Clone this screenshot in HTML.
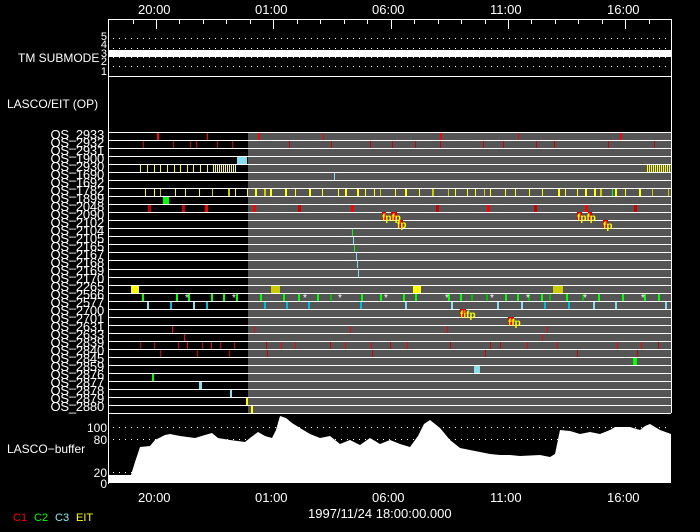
<!DOCTYPE html>
<html><head><meta charset="utf-8"><style>
html,body{margin:0;padding:0;background:#000;width:700px;height:532px;overflow:hidden}
svg{display:block}
text{font-family:"Liberation Sans",sans-serif;fill:#fff}
.os{font-size:13px;text-anchor:end;letter-spacing:-0.2px}
</style></head><body>
<svg id="s" width="700" height="532" viewBox="0 0 700 532">
<rect width="700" height="532" fill="#000"/>
<g font-size="13">
<text x="138" y="14">20:00</text><text x="255" y="14">01:00</text><text x="372" y="14">06:00</text><text x="490" y="14">11:00</text><text x="607" y="14">16:00</text>
<text x="138" y="502">20:00</text><text x="255" y="502">01:00</text><text x="372" y="502">06:00</text><text x="490" y="502">11:00</text><text x="607" y="502">16:00</text>
<text x="308" y="518">1997/11/24 18:00:00.000</text>
</g>
<rect x="248" y="132" width="423" height="281" fill="#555"/>
<g id="marks"></g>
<g id="lines" stroke="#fff" stroke-width="1"></g>
<g stroke="#fff" fill="none">
<line x1="108.5" y1="19" x2="108.5" y2="484"/>
<line x1="671.5" y1="19" x2="671.5" y2="413"/>
<line x1="108" y1="19.5" x2="672" y2="19.5"/>
<line x1="108" y1="76.5" x2="672" y2="76.5"/>
</g>
<g id="ticks" stroke="#fff"></g>
<g stroke="#fff" stroke-dasharray="1,5">
<line x1="113" y1="38.5" x2="671" y2="38.5"/>
<line x1="113" y1="48.5" x2="671" y2="48.5"/>
<line x1="113" y1="57.5" x2="671" y2="57.5"/>
<line x1="113" y1="66.5" x2="671" y2="66.5"/>
<line x1="113" y1="427.5" x2="671" y2="427.5"/>
<line x1="113" y1="439.5" x2="671" y2="439.5"/>
<line x1="113" y1="472.5" x2="135" y2="472.5"/>
</g>
<rect x="109" y="50" width="562" height="7" fill="#fff"/>
<g font-size="11" text-anchor="end">
<text x="107" y="40">5</text><text x="107" y="48">4</text><text x="107" y="57">3</text><text x="107" y="65">2</text><text x="107" y="75">1</text>
</g>
<text x="18" y="62" font-size="12">TM SUBMODE</text>
<text x="7" y="108" font-size="12">LASCO/EIT (OP)</text>
<polygon fill="#fff" points="109,483 109,475 131,475 135,462 140,447 150,446 155,440 165,435 170,434 180,436 195,438 205,435 212,433 218,438 230,440 245,442 250,438 258,432 265,436 272,438 276,430 280,416 286,418 292,423 300,428 310,434 320,438 330,436 340,444 350,440 360,445 370,438 380,444 390,440 400,444 410,447 418,436 424,424 430,420 440,428 450,440 460,448 470,450 480,452 490,454 500,455 510,455 520,456 540,455 550,457 555,454 560,430 570,431 580,434 590,432 600,434 610,430 615,427 630,427 640,430 645,426 650,424 660,430 671,434 671,483"/>
<g font-size="12" text-anchor="end">
<text x="107" y="432">100</text><text x="107" y="444">80</text><text x="107" y="477">20</text><text x="107" y="488">0</text>
</g>
<text x="7" y="453" font-size="12">LASCO−buffer</text>
<g font-size="11">
<text x="13" y="521" style="fill:#f00">C1</text><text x="34" y="521" style="fill:#0f0">C2</text><text x="55" y="521" style="fill:#8ee">C3</text><text x="76" y="521" style="fill:#ff0">EIT</text>
</g>
<g class="os">
<text x="104" y="139">OS_2933</text><text x="104" y="147">OS_2932</text><text x="104" y="155">OS_2931</text><text x="104" y="163">OS_1900</text><text x="104" y="171">OS_2930</text><text x="104" y="179">OS_1690</text><text x="104" y="187">OS_1692</text><text x="104" y="195">OS_1782</text><text x="104" y="203">OS_1899</text><text x="104" y="211">OS_2048</text><text x="104" y="219">OS_2090</text><text x="104" y="227">OS_2102</text><text x="104" y="235">OS_2104</text><text x="104" y="243">OS_2105</text><text x="104" y="251">OS_2165</text><text x="104" y="259">OS_2167</text><text x="104" y="267">OS_2168</text><text x="104" y="275">OS_2169</text><text x="104" y="283">OS_2170</text><text x="104" y="291">OS_2265</text><text x="104" y="299">OS_2566</text><text x="104" y="307">OS_2577</text><text x="104" y="315">OS_2700</text><text x="104" y="323">OS_2701</text><text x="104" y="331">OS_2631</text><text x="104" y="339">OS_2633</text><text x="104" y="347">OS_2839</text><text x="104" y="355">OS_2840</text><text x="104" y="363">OS_2845</text><text x="104" y="371">OS_2859</text><text x="104" y="379">OS_2876</text><text x="104" y="387">OS_2877</text><text x="104" y="395">OS_2878</text><text x="104" y="403">OS_2879</text><text x="104" y="411">OS_2880</text>
</g>
<g fill="#d00">
<rect x="382" y="212" width="4" height="8"/><rect x="391" y="212" width="6" height="8"/><rect x="398" y="220" width="5" height="8"/>
<rect x="577" y="212" width="5" height="8"/><rect x="588" y="212" width="4" height="8"/><rect x="603" y="220" width="5" height="8"/>
<rect x="460" y="309" width="6" height="8"/><rect x="508" y="317" width="6" height="8"/>
</g>
<g font-size="10" style="font-weight:bold">
<text x="382" y="221" style="fill:#ff0">fpfp</text><text x="397" y="228" style="fill:#ff0">fp</text>
<text x="577" y="221" style="fill:#ff0">fpfp</text><text x="603" y="229" style="fill:#ff0">fp</text>
<text x="460" y="318" style="fill:#ff0">fifp</text><text x="508" y="326" style="fill:#ff0">ffp</text>
</g>
</svg>
<script>
var NS="http://www.w3.org/2000/svg";
function el(p,t,a){var e=document.createElementNS(NS,t);for(var k in a)e.setAttribute(k,a[k]);p.appendChild(e);return e;}
var L=document.getElementById('lines'),M=document.getElementById('marks'),T=document.getElementById('ticks');
function ry(i){return Math.round(132+8.03*i);}
for(var i=0;i<=35;i++){var y=ry(i)+0.5;el(L,'line',{x1:109,y1:y,x2:671,y2:y});}
for(var h=0;h<25;h++){var x=Math.round(132.5+23.47*h)+0.5;if(x>671)break;var maj=(h%5==1);el(T,'line',{x1:x,y1:19,x2:x,y2:maj?29:24});}
function m(r,x,w,c,hh){var y=ry(r)+1;el(M,'rect',{x:x,y:y,width:w,height:hh||7,fill:c});}
var R='#f00',D='#c00',Y='#ff0',O='#cc0',G='#0f0',g='#0b0',C='#8de',B='#0bd';
[157,207,258,323,440,518,620].forEach(function(x,i){m(0,x,i%2?1:2,R)});
[143,173,190,196,217,232,289,331,370,392,415,440,483,503,536,554,608,654].forEach(function(x){m(1,x,1,D)});
m(3,237,10,C);
[140,147,154,160,167,174,180,187,193,200,207,213].forEach(function(x){m(4,x,1,Y)});
for(var x=213;x<236;x+=2)m(4,x,1,Y);
for(var x=647;x<671;x+=2)m(4,x,1,Y);
m(5,334,1,C);m(7,612,1,G);
for(var x=145;x<671;x+=6+((x*7)%11)){m(7,x,(x%3==0)?2:1,(x%4==0)?O:Y);}
m(8,163,6,G);
[148,182,205,253,298,351,436,487,534,585,634].forEach(function(x){m(9,x,3,(x%2)?R:D)});
m(12,352,1,G);m(13,353,1,C);m(14,354,1,G);m(15,356,1,C);m(16,357,1,C);m(17,358,1,C);
m(19,131,8,Y);m(19,271,9,O);m(19,413,8,Y);m(19,553,10,O);
[142,176,188,211,223,236,260,283,298,317,330,361,380,403,415,448,460,471,486,505,517,528,541,549,566,582,598,622,644,658].forEach(function(x){m(20,x,2,(x%3)?G:g)});
[147,170,193,206,264,286,308,360,405,451,497,521,544,568,593,615,665].forEach(function(x){m(21,x,2,(x%2)?C:B)});
[172,254,350,447,547].forEach(function(x){m(24,x,1,R)});
[184,542].forEach(function(x){m(25,x,1,R)});
[140,154,178,187,202,211,220,234,266,281,295,330,345,371,390,407,450,490,500,527,557,617,641,658].forEach(function(x){m(26,x,1,(x%2)?R:D)});
[160,197,229,267,372,485,577,637].forEach(function(x){m(27,x,1,D)});
m(29,474,6,C);m(28,633,4,G);
m(30,152,2,G);m(31,199,3,C);m(32,230,2,C);m(33,246,2,Y);m(34,251,2,Y);
[185,232,303,338,384,445,490,526,583,641].forEach(function(x){var t=el(M,'text',{x:x,y:ry(20)+8,'font-size':10});t.textContent='*';});
</script>
</body></html>
